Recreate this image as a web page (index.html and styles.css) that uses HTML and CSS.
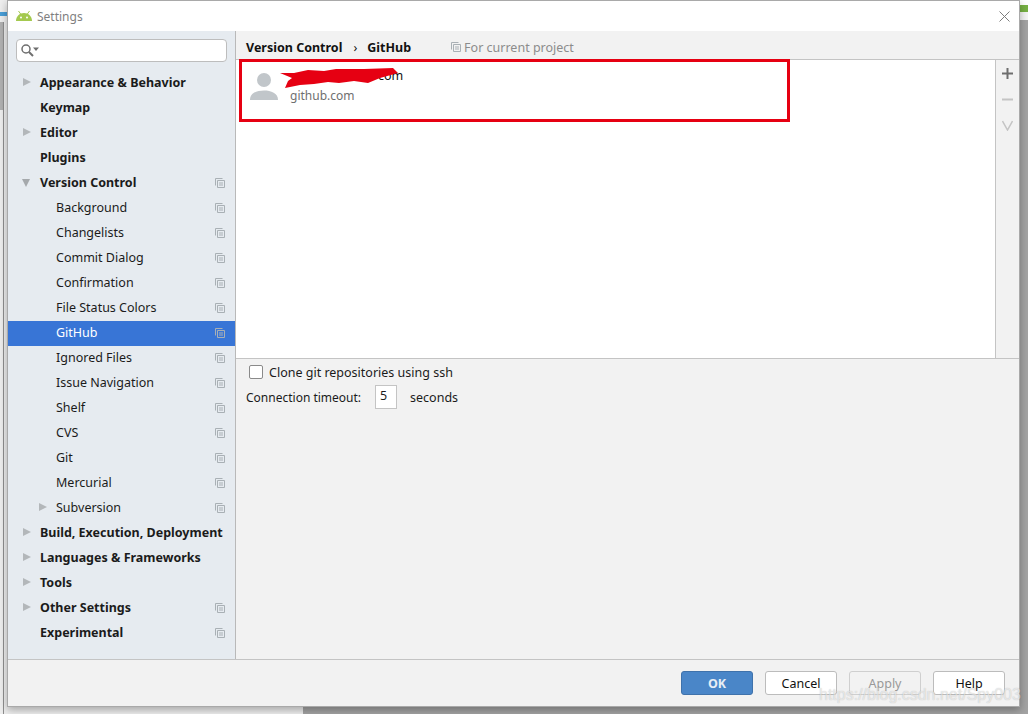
FILE: index.html
```html
<!DOCTYPE html>
<html lang="en">

<head>
    <meta charset="UTF-8">
    <title>Settings</title>
    <link rel="stylesheet" href="styles.css">
</head>

<body>
    <svg class="defs" width="0" height="0">
        <symbol id="copy" viewBox="0 0 10 10">
            <path d="M0.5 7.5V0.5H7.5M2.5 2.5H9.5V9.5H2.5ZM4 5H8M4 7H8" fill="none" stroke="#a9b0b5" stroke-width="1"/>
        </symbol>
    </svg>

    <div class="window">
        <!-- title bar -->
        <div class="title-bar">
            <svg class="android" viewBox="0 0 16 10" width="16" height="10">
                <path d="M0 10C0 5.500 3.500 2 8 2S16 5.500 16 10Z" fill="#a4c94f"/>
                <path d="M2.500 0L5 3.500M13.500 0L11 3.500" stroke="#a4c94f" stroke-width="1"/>
                <circle cx="5" cy="6.500" r="1" fill="#fff"/>
                <circle cx="11" cy="6.500" r="1" fill="#fff"/>
            </svg>
            <span class="title">Settings</span>
            <svg class="close" viewBox="0 0 11 11" width="11" height="11">
                <path d="M0.500 0.500L10.500 10.500M10.500 0.500L0.500 10.500" stroke="#7d7d7d" stroke-width="1"/>
            </svg>
        </div>

        <div class="main">
            <!-- left tree -->
            <div class="sidebar">
                <div class="search">
                    <svg viewBox="0 0 18 13" width="18" height="13">
                        <circle cx="5" cy="5" r="4" fill="none" stroke="#6e6e6e" stroke-width="1.500"/>
                        <path d="M8 8L12 12" stroke="#6e6e6e" stroke-width="2"/>
                        <path d="M12 3.500H18L15 7Z" fill="#6e6e6e"/>
                    </svg>
                </div>
                <ul class="tree">
                    <li class="row top"><i class="arrow"></i>Appearance &amp; Behavior</li>
                    <li class="row top">Keymap</li>
                    <li class="row top"><i class="arrow"></i>Editor</li>
                    <li class="row top">Plugins</li>
                    <li class="row top"><i class="arrow open"></i>Version Control<svg class="copy"><use href="#copy"/></svg></li>
                    <li class="row sub">Background<svg class="copy"><use href="#copy"/></svg></li>
                    <li class="row sub">Changelists<svg class="copy"><use href="#copy"/></svg></li>
                    <li class="row sub">Commit Dialog<svg class="copy"><use href="#copy"/></svg></li>
                    <li class="row sub">Confirmation<svg class="copy"><use href="#copy"/></svg></li>
                    <li class="row sub">File Status Colors<svg class="copy"><use href="#copy"/></svg></li>
                    <li class="row sub selected">GitHub<svg class="copy"><use href="#copy"/></svg></li>
                    <li class="row sub">Ignored Files<svg class="copy"><use href="#copy"/></svg></li>
                    <li class="row sub">Issue Navigation<svg class="copy"><use href="#copy"/></svg></li>
                    <li class="row sub">Shelf<svg class="copy"><use href="#copy"/></svg></li>
                    <li class="row sub">CVS<svg class="copy"><use href="#copy"/></svg></li>
                    <li class="row sub">Git<svg class="copy"><use href="#copy"/></svg></li>
                    <li class="row sub">Mercurial<svg class="copy"><use href="#copy"/></svg></li>
                    <li class="row sub"><i class="arrow"></i>Subversion<svg class="copy"><use href="#copy"/></svg></li>
                    <li class="row top"><i class="arrow"></i>Build, Execution, Deployment</li>
                    <li class="row top"><i class="arrow"></i>Languages &amp; Frameworks</li>
                    <li class="row top"><i class="arrow"></i>Tools</li>
                    <li class="row top"><i class="arrow"></i>Other Settings<svg class="copy"><use href="#copy"/></svg></li>
                    <li class="row top">Experimental<svg class="copy"><use href="#copy"/></svg></li>
                </ul>
            </div>

            <!-- right panel -->
            <div class="content">
                <div class="crumbs">
                    <b>Version Control</b>
                    <span class="sep">›</span>
                    <b>GitHub</b>
                    <span class="scope"><svg class="copy"><use href="#copy"/></svg>For current project</span>
                </div>
                <div class="accounts">
                    <div class="account-list">
                        <div class="account">
                            <svg class="avatar" viewBox="0 0 28 28" width="28" height="28">
                                <circle cx="14" cy="7" r="7" fill="#c1c6ca"/>
                                <path d="M0 27C0 20 7 17.500 14 17.500S28 20 28 27Z" fill="#c1c6ca"/>
                            </svg>
                            <div class="account-text">
                                <div class="login">com</div>
                                <div class="server">github.com</div>
                            </div>
                        </div>
                        <svg class="scribble" viewBox="0 0 120 20" width="120" height="20">
                            <path d="M0 5L14 5L28 2L44 3L56 1L84 1L113 0L118 5L100 10L88 15L74 13L59 15L48 14L34 16L20 17L5 20L8 13L12 10Z" fill="#e60012"/>
                        </svg>
                        <div class="highlight"></div>
                    </div>
                    <div class="side-tools">
                        <svg viewBox="0 0 11 11" width="11" height="11"><path d="M5.500 0V11M0 5.500H11" stroke="#6e6e6e" stroke-width="2"/></svg>
                        <svg viewBox="0 0 11 11" width="11" height="11"><path d="M0 5.500H11" stroke="#c4c4c4" stroke-width="2"/></svg>
                        <svg viewBox="0 0 11 11" width="11" height="11"><path d="M0.500 1L5.500 10L10.500 1" fill="none" stroke="#c4c4c4" stroke-width="1.500"/></svg>
                    </div>
                </div>
                <div class="options">
                    <label class="check"><span class="box"></span>Clone git repositories using ssh</label>
                    <div class="timeout">
                        <span class="timeout-label">Connection timeout:</span>
                        <span class="num">5</span>
                        <span>seconds</span>
                    </div>
                </div>
            </div>
        </div>

        <!-- bottom buttons -->
        <div class="footer">
            <button class="btn primary">OK</button>
            <button class="btn">Cancel</button>
            <button class="btn disabled">Apply</button>
            <button class="btn">Help</button>
        </div>
    </div>

    <div class="watermark">https://blog.csdn.net/Spy003</div>
</body>

</html>
```

FILE: styles.css
```css
html,
body {
    margin: 0;
    padding: 0;
    width: 1028px;
    height: 714px;
    overflow: hidden;
}

/* what shows round the dialog: other windows behind it */
body {
    background:
        linear-gradient(#b0b0b0, #b0b0b0) 0 22px / 3px 88px no-repeat,
        linear-gradient(#4a9fd8, #4a9fd8) 0 12px / 7px 4px no-repeat,
        linear-gradient(#8f8f8f, #8f8f8f) 3px 22px / 1px 692px no-repeat,
        linear-gradient(#fff, #fff) 1020px 0 / 8px 5px no-repeat,
        linear-gradient(#76b043, #76b043) 1020px 5px / 8px 7px no-repeat,
        linear-gradient(#f4f4f4, #f4f4f4) 1020px 12px / 8px 8px no-repeat,
        linear-gradient(#a3a3a3, #a3a3a3) 303px 20px / 725px 694px no-repeat,
        #eeeeee;
    font-family: "Noto Sans", "Open Sans", sans-serif;
    font-size: 12.500px;
    color: #1b1b1b;
    padding: 0 8px 0 7px;
    box-sizing: border-box;
    position: relative;
}

.defs {
    position: absolute;
}

.window {
    height: 707px;
    display: flex;
    flex-direction: column;
    border: 1px solid #a9a9a9;
    background-color: #f2f2f2;
    box-shadow: 0 3px 8px rgba(0, 0, 0, 0.3);
    box-sizing: border-box;
}

/* title bar */
.title-bar {
    height: 30px;
    flex: none;
    display: flex;
    align-items: center;
    background-color: #fff;
    padding: 0 8px;
}

.android {
    margin-right: 5px;
}

.title {
    color: #7f7f7f;
    font-size: 12px;
    flex: 1;
}

.close {
    margin-right: 1px;
}

.main {
    flex: 1;
    display: flex;
    min-height: 0;
}

/* left tree */
.sidebar {
    width: 227px;
    flex: none;
    background-color: #e6ebf0;
    border-right: 1px solid #b9b9b9;
    padding-top: 8px;
}

.search {
    height: 21px;
    margin: 0 8px;
    background-color: #fff;
    border: 1px solid #bdbdbd;
    border-radius: 4px;
    display: flex;
    align-items: center;
    padding-left: 4px;
}

.tree {
    list-style: none;
    margin: 9px 0 0;
    padding: 0;
}

.row {
    height: 25px;
    line-height: 23px;
    position: relative;
    white-space: nowrap;
}

.top {
    padding-left: 32px;
    font-weight: 700;
}

.sub {
    padding-left: 48px;
}

.selected {
    background-color: #3875d6;
    color: #fff;
}

.arrow {
    position: absolute;
    left: 15px;
    top: 7px;
    width: 0;
    height: 0;
    border-left: 8px solid #b3b7ba;
    border-top: 4.500px solid transparent;
    border-bottom: 4.500px solid transparent;
}

.arrow.open {
    left: 14px;
    top: 8px;
    border-top: 8px solid #a5a9ac;
    border-left: 4.500px solid transparent;
    border-right: 4.500px solid transparent;
    border-bottom: 0;
}

.sub .arrow {
    left: 31px;
}

.copy {
    width: 10px;
    height: 10px;
}

.row .copy {
    position: absolute;
    right: 10px;
    top: 7px;
}

/* right panel */
.content {
    flex: 1;
    min-width: 0;
    display: flex;
    flex-direction: column;
}

.crumbs {
    height: 24px;
    flex: none;
    display: flex;
    align-items: center;
    padding: 4px 0 0 10px;
    color: #111;
}

.sep {
    margin: 0 10px 0 11px;
}

.scope {
    margin-left: 40px;
    color: #8c8c8c;
    display: flex;
    align-items: center;
}

.scope .copy {
    margin-right: 3px;
}

.accounts {
    height: 298px;
    flex: none;
    display: flex;
    border-top: 1px solid #c4c4c4;
    border-bottom: 1px solid #c4c4c4;
}

.account-list {
    flex: 1;
    background-color: #fff;
    position: relative;
}

.account {
    display: flex;
    padding: 13px 0 0 14px;
}

.avatar {
    margin-right: 12px;
}

.account-text {
    line-height: 17px;
    margin-top: -6px;
}

.login {
    padding-left: 88px;
    color: #111;
    height: 18px;
}

.server {
    margin-top: 2px;
    color: #6f6f6f;
    font-size: 12px;
}

.scribble {
    position: absolute;
    left: 44px;
    top: 8px;
}

.highlight {
    position: absolute;
    left: 3px;
    top: -1px;
    width: 551px;
    height: 63px;
    border: 3px solid #e60012;
    box-sizing: border-box;
}

.side-tools {
    width: 24px;
    flex: none;
    border-left: 1px solid #c4c4c4;
    display: flex;
    flex-direction: column;
    align-items: center;
    gap: 15px;
    padding-top: 8px;
    box-sizing: border-box;
}

.options {
    padding: 4px 10px;
}

.check {
    display: flex;
    align-items: center;
    height: 18px;
}

.box {
    width: 12px;
    height: 12px;
    background-color: #fff;
    border: 1px solid #8a8a8a;
    border-radius: 2px;
    margin: 0 6px 0 3px;
}

.timeout {
    display: flex;
    align-items: center;
    margin-top: 4px;
}

.timeout-label {
    font-size: 12px;
}

.num {
    width: 22px;
    height: 24px;
    line-height: 20px;
    margin: 0 13px 0 14px;
    padding-left: 4px;
    background-color: #fff;
    border: 1px solid #c4c4c4;
    box-sizing: border-box;
}

/* bottom buttons */
.footer {
    height: 47px;
    flex: none;
    display: flex;
    justify-content: flex-end;
    align-items: flex-start;
    gap: 12px;
    padding: 11px 14px 0 0;
    border-top: 1px solid #c4c4c4;
    box-sizing: border-box;
}

.btn {
    width: 72px;
    height: 24px;
    padding: 0;
    font-family: inherit;
    font-size: 12.500px;
    color: #111;
    background-color: #fff;
    border: 1px solid #bcbcbc;
    border-radius: 3px;
}

.primary {
    background-color: #4a86c8;
    border-color: #3f72ab;
    color: #e8eef5;
    font-weight: 700;
}

.disabled {
    background-color: #f2f2f2;
    border-color: #cfcfcf;
    color: #999;
}

.watermark {
    position: absolute;
    left: 819px;
    top: 686px;
    font-family: "Liberation Sans", sans-serif;
    font-size: 16px;
    color: rgba(255, 255, 255, 0.6);
    text-shadow: 0 0 1px rgba(0, 0, 0, 0.25);
    white-space: nowrap;
}
```
